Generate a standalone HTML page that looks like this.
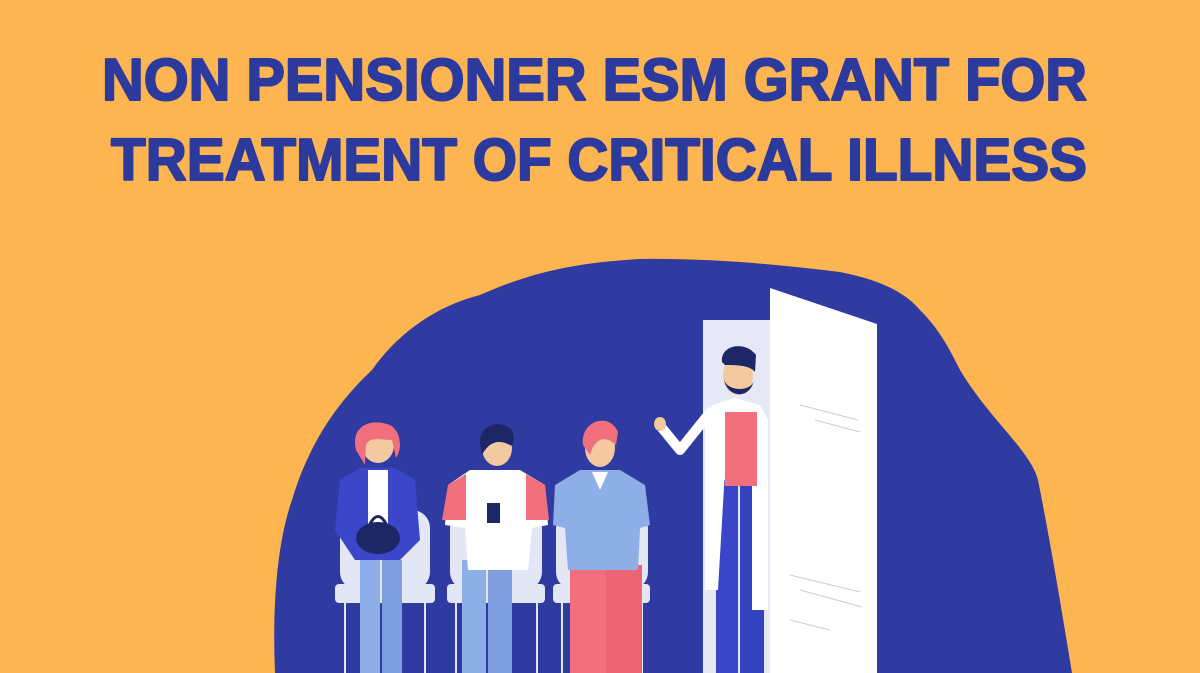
<!DOCTYPE html>
<html><head><meta charset="utf-8"><style>
html,body{margin:0;padding:0;background:#FDB552;}
svg{display:block}
</style></head><body>
<svg width="1200" height="673" viewBox="0 0 1200 673" xmlns="http://www.w3.org/2000/svg">
<rect width="1200" height="673" fill="#FDB552"/>
<g font-family="Liberation Sans, sans-serif" font-weight="bold" font-size="59" fill="#2C3A9E" stroke="#2C3A9E" stroke-width="2" stroke-linejoin="round">
<text x="102" y="100" textLength="985" lengthAdjust="spacingAndGlyphs">NON PENSIONER ESM GRANT FOR</text>
<text x="111" y="180" textLength="976" lengthAdjust="spacingAndGlyphs">TREATMENT OF CRITICAL ILLNESS</text>
</g>
<!-- blob -->
<path d="M275 673 C272 600 278 540 292 500 C310 440 340 400 372 370 C400 330 440 305 480 295 C540 268 590 262 640 259 C720 258 790 266 840 272 C880 280 905 292 920 310 C940 330 950 350 960 370 C990 420 1030 450 1038 480 C1050 540 1060 600 1072 673 Z" fill="#2F3BA0"/>
<!-- door frame -->
<rect x="703" y="320" width="70" height="353" fill="#E6E8F6"/>
<polygon points="770,288 877,324 877,673 770,673" fill="#FFFFFF"/>
<g stroke="#C9CCE0" stroke-width="1">
<line x1="800" y1="405" x2="858" y2="420"/><line x1="815" y1="420" x2="860" y2="432"/>
<line x1="790" y1="575" x2="860" y2="592"/><line x1="800" y1="590" x2="862" y2="607"/><line x1="790" y1="620" x2="830" y2="630"/>
</g>
<!-- chair backs -->
<rect x="340" y="510" width="90" height="80" rx="18" fill="#E3E6F5"/>
<rect x="450" y="510" width="92" height="80" rx="18" fill="#E3E6F5"/>
<rect x="556" y="510" width="92" height="80" rx="18" fill="#E3E6F5"/>
<!-- chair seats -->
<rect x="335" y="584" width="100" height="19" rx="4" fill="#E3E6F5"/>
<rect x="447" y="584" width="98" height="19" rx="4" fill="#E3E6F5"/>
<rect x="553" y="584" width="97" height="19" rx="4" fill="#E3E6F5"/>
<g stroke="#E3E6F5" stroke-width="2">
<line x1="345" y1="603" x2="345" y2="673"/><line x1="425" y1="603" x2="425" y2="673"/>
<line x1="456" y1="603" x2="456" y2="673"/><line x1="537" y1="603" x2="537" y2="673"/>
<line x1="562" y1="603" x2="562" y2="673"/><line x1="642" y1="603" x2="642" y2="673"/>
</g>
<!-- woman -->
<rect x="360" y="560" width="20" height="113" fill="#8EAEE8"/>
<rect x="382" y="560" width="20" height="113" fill="#7E9EDE"/>
<path d="M340 480 L360 468 L395 468 L415 480 L420 540 L400 560 L355 560 L335 530 Z" fill="#3B47C8"/>
<rect x="368" y="470" width="20" height="80" fill="#FFFFFF"/>
<ellipse cx="378" cy="538" rx="22" ry="16" fill="#1E2766"/>
<path d="M368 528 Q378 505 388 528" stroke="#1E2766" stroke-width="3" fill="none"/>
<ellipse cx="378" cy="445" rx="16" ry="18" fill="#F4C9A0"/>
<path d="M356 450 C350 425 372 418 390 425 C402 432 402 450 396 458 L392 440 C380 440 370 436 366 445 L365 465 Z" fill="#F2707E"/>
<!-- man 2 -->
<rect x="462" y="560" width="24" height="113" fill="#8EAEE8"/>
<rect x="488" y="560" width="24" height="113" fill="#7E9EDE"/>
<path d="M448 485 L470 470 L520 470 L545 485 L548 525 L532 528 L528 570 L468 570 L465 528 L445 525 Z" fill="#FFFFFF"/>
<path d="M448 485 L466 474 L466 520 L442 520 Z" fill="#F2707E"/>
<path d="M545 485 L526 474 L526 520 L549 520 Z" fill="#F2707E"/>
<rect x="487" y="503" width="13" height="20" fill="#1E2766"/>
<ellipse cx="497" cy="448" rx="15" ry="18" fill="#F4C9A0"/>
<path d="M480 445 C478 425 500 418 512 430 C516 440 512 448 510 445 C500 440 490 440 482 455 Z" fill="#1E2766"/>
<!-- man 3 -->
<rect x="570" y="565" width="36" height="108" fill="#F2707E"/>
<rect x="606" y="565" width="36" height="108" fill="#EE6475"/>
<path d="M555 485 L580 470 L620 470 L645 485 L650 525 L640 528 L638 570 L568 570 L565 528 L553 525 Z" fill="#8EAEE8"/>
<path d="M592 472 L600 490 L608 472 Z" fill="#FFFFFF"/>
<ellipse cx="600" cy="448" rx="15" ry="19" fill="#F4C9A0"/>
<path d="M583 445 C580 420 610 412 618 432 L616 445 C605 435 595 438 590 455 Z" fill="#F2707E"/>
<!-- doctor -->
<rect x="716" y="480" width="22" height="193" fill="#3A46C8"/>
<rect x="740" y="480" width="24" height="193" fill="#3442BD"/>
<path d="M712 405 L735 398 L760 405 L768 420 L768 610 L752 610 L752 470 L725 470 L718 590 L705 590 L705 420 Z" fill="#FFFFFF"/>
<rect x="725" y="412" width="32" height="74" fill="#F2707E"/>
<path d="M712 410 L680 450 L662 428" stroke="#FFFFFF" stroke-width="10" fill="none" stroke-linejoin="round"/>
<ellipse cx="660" cy="424" rx="6" ry="7" fill="#F4C9A0"/>
<ellipse cx="738" cy="375" rx="15" ry="20" fill="#F4C9A0"/>
<path d="M722 362 C720 345 745 340 756 355 L755 372 C750 365 735 365 725 365 Z" fill="#1E2766"/>
<path d="M724 380 C728 398 750 400 754 380 C752 392 728 392 724 380 Z" fill="#1E2766"/>
</svg>
</body></html>
